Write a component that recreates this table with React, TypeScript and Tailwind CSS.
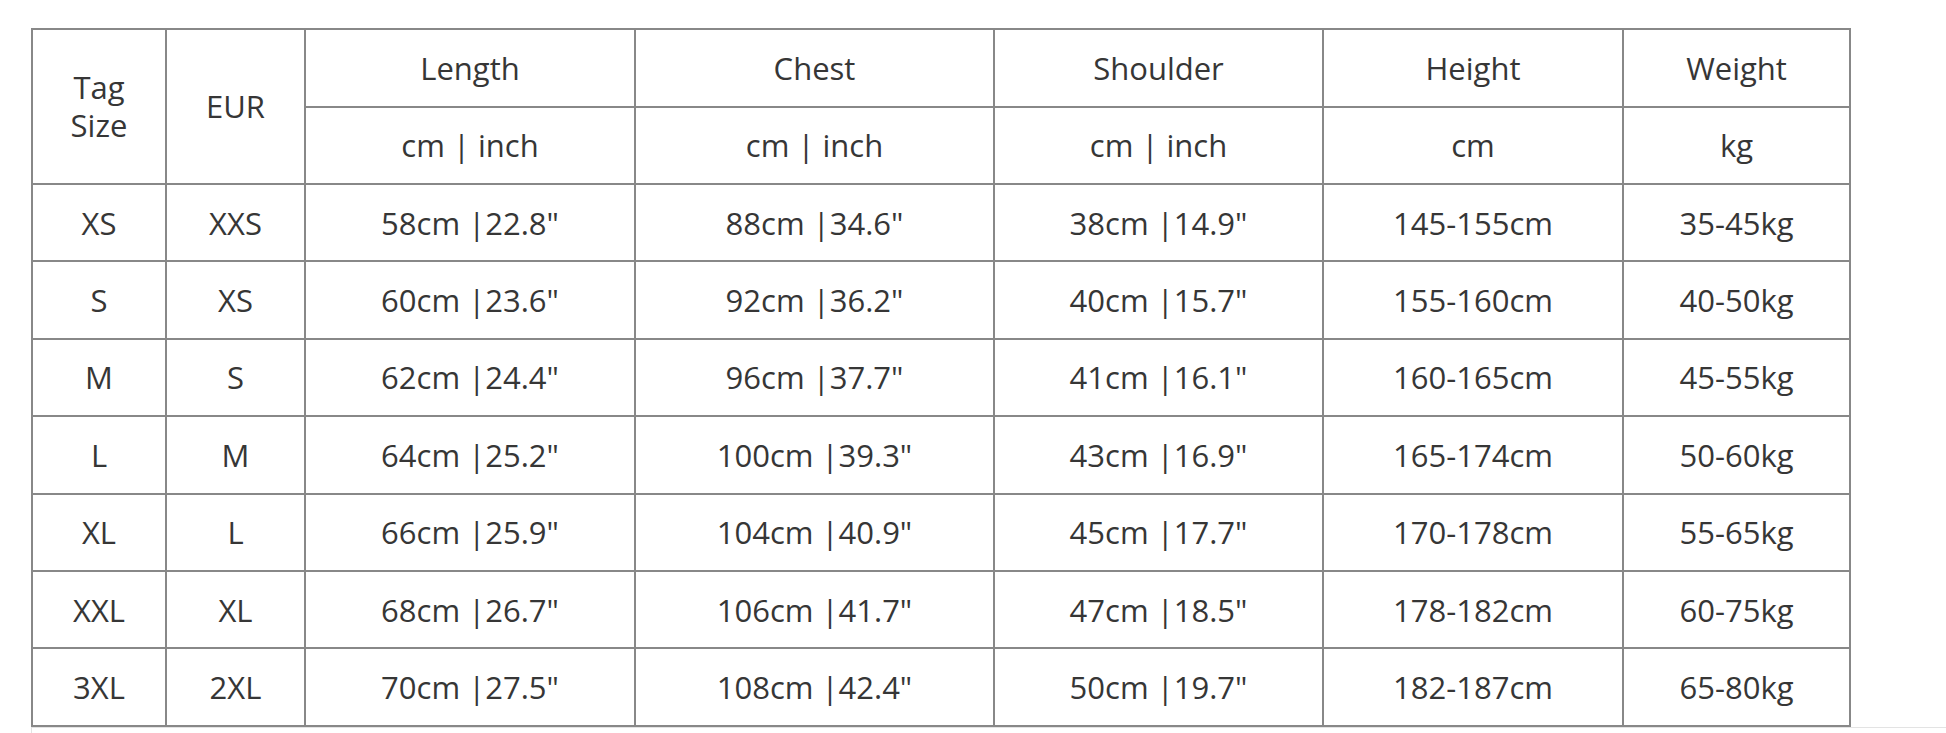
import React from 'react';

const rows: string[][] = [
  ['XS', 'XXS', '58cm |22.8"', '88cm |34.6"', '38cm |14.9"', '145-155cm', '35-45kg'],
  ['S', 'XS', '60cm |23.6"', '92cm |36.2"', '40cm |15.7"', '155-160cm', '40-50kg'],
  ['M', 'S', '62cm |24.4"', '96cm |37.7"', '41cm |16.1"', '160-165cm', '45-55kg'],
  ['L', 'M', '64cm |25.2"', '100cm |39.3"', '43cm |16.9"', '165-174cm', '50-60kg'],
  ['XL', 'L', '66cm |25.9"', '104cm |40.9"', '45cm |17.7"', '170-178cm', '55-65kg'],
  ['XXL', 'XL', '68cm |26.7"', '106cm |41.7"', '47cm |18.5"', '178-182cm', '60-75kg'],
  ['3XL', '2XL', '70cm |27.5"', '108cm |42.4"', '50cm |19.7"', '182-187cm', '65-80kg'],
];

const cell = 'border-2 border-[#888888] text-center align-middle p-0';

export default function App() {
  return (
    <div
      className="min-h-[733px] bg-white pt-[28px] pl-[31px] text-[31px] leading-[1.3] text-[#363636]"
      style={{ fontFamily: '"Open Sans", "Noto Sans", sans-serif' }}
    >
      <table className="table-fixed border-collapse w-[1818px]">
        <colgroup>
          <col className="w-[134px]" />
          <col className="w-[139px]" />
          <col className="w-[330px]" />
          <col className="w-[359px]" />
          <col className="w-[329px]" />
          <col className="w-[300px]" />
          <col className="w-[227px]" />
        </colgroup>
        <thead className="font-normal">
          <tr className="h-[78px]">
            <th rowSpan={2} className={`${cell} font-normal leading-[1.2]`}>
              Tag
              <br />
              Size
            </th>
            <th rowSpan={2} className={`${cell} font-normal`}>EUR</th>
            <th className={`${cell} font-normal`}>Length</th>
            <th className={`${cell} font-normal`}>Chest</th>
            <th className={`${cell} font-normal`}>Shoulder</th>
            <th className={`${cell} font-normal`}>Height</th>
            <th className={`${cell} font-normal`}>Weight</th>
          </tr>
          <tr className="h-[77px]">
            <td className={cell}>cm | inch</td>
            <td className={cell}>cm | inch</td>
            <td className={cell}>cm | inch</td>
            <td className={cell}>cm</td>
            <td className={cell}>kg</td>
          </tr>
        </thead>
        <tbody>
          {rows.map((r) => (
            <tr key={r[0]} className="h-[77.4px]">
              {r.map((v, i) => (
                <td key={i} className={cell}>{v}</td>
              ))}
            </tr>
          ))}
        </tbody>
      </table>
      <div className="h-[8px] border-t border-l border-[#e3e3e3]" />
    </div>
  );
}
